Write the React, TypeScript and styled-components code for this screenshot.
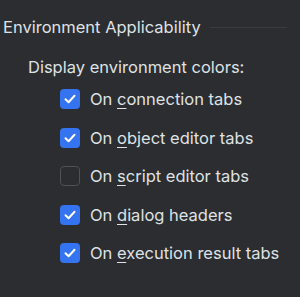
import { createGlobalStyle, styled } from "styled-components";

const GlobalStyle = createGlobalStyle`
  html, body {
    margin: 0;
    padding: 0;
    background: #2b2d30;
  }
  body {
    font-family: Inter, "Noto Sans", sans-serif;
    color: #dfe1e5;
    font-size: 16.5px;
  }
`;

const Panel = styled.div`
  width: 300px;
  height: 297px;
  padding-top: 17px;
  box-sizing: border-box;
`;

const Header = styled.div`
  display: flex;
  align-items: center;
  gap: 9px;
  padding-left: 3px;
  padding-right: 13px;
  height: 20px;
  line-height: 20px;
`;

const Title = styled.span`
  white-space: nowrap;
`;

const Divider = styled.div`
  flex: 1;
  height: 1px;
  background: #393b40;
  margin-top: 1px;
`;

const Label = styled.div`
  margin-top: 20px;
  padding-left: 28px;
  line-height: 20px;
`;

const Options = styled.ul`
  list-style: none;
  margin: 3px 0 0;
  padding: 0 0 0 60px;
`;

const Row = styled.li`
  display: flex;
  align-items: center;
  gap: 10px;
  height: 38.5px;
  line-height: 20px;
`;

const Box = styled.span<{ $checked: boolean }>`
  box-sizing: border-box;
  width: 20px;
  height: 20px;
  border-radius: 4px;
  flex: none;
  display: flex;
  align-items: center;
  justify-content: center;
  background: ${(p) => (p.$checked ? "#3574f0" : "transparent")};
  border: ${(p) => (p.$checked ? "none" : "1px solid #4e5157")};
`;

const Mnemonic = styled.span`
  text-decoration: underline;
  text-underline-offset: 3px;
  text-decoration-thickness: 1px;
`;

interface IOption {
  before: string;
  key: string;
  after: string;
  checked: boolean;
}

const options: IOption[] = [
  { before: "On ", key: "c", after: "onnection tabs", checked: true },
  { before: "On ", key: "o", after: "bject editor tabs", checked: true },
  { before: "On ", key: "s", after: "cript editor tabs", checked: false },
  { before: "On ", key: "d", after: "ialog headers", checked: true },
  { before: "On ", key: "e", after: "xecution result tabs", checked: true },
];

const Check = () => (
  <svg width="14" height="14" viewBox="0 0 14 14" fill="none">
    <path d="M2.5 7.2 L5.6 10.2 L11.5 3.8" stroke="#ffffff" strokeWidth="2" strokeLinecap="round" strokeLinejoin="round" />
  </svg>
);

const App = () => {
  return (
    <>
      <GlobalStyle />
      <Panel>
        <Header>
          <Title>Environment Applicability</Title>
          <Divider />
        </Header>
        <Label>Display environment colors:</Label>
        <Options>
          {options.map((option, index) => {
            return (
              <Row key={index}>
                <Box $checked={option.checked}>{option.checked && <Check />}</Box>
                <span>
                  {option.before}
                  <Mnemonic>{option.key}</Mnemonic>
                  {option.after}
                </span>
              </Row>
            );
          })}
        </Options>
      </Panel>
    </>
  );
};

export default App;
